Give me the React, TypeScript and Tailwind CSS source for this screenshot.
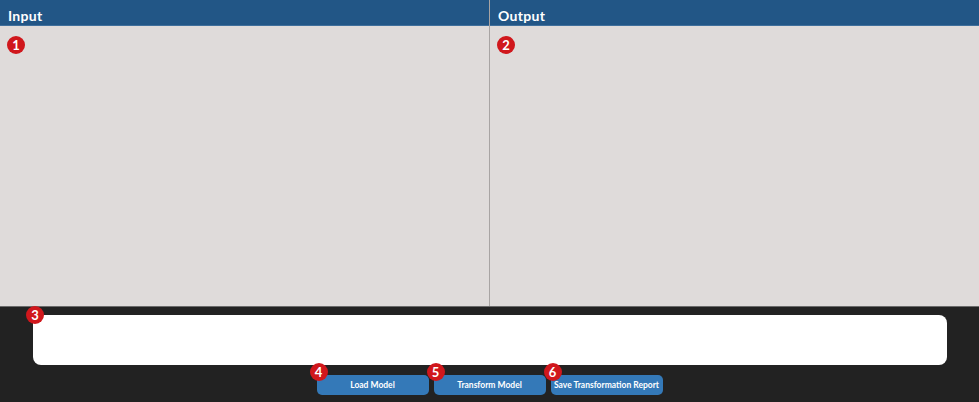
// Model transformer layout: input/output panes, log box, action buttons.

function Badge({ n, className }: { n: number; className?: string }) {
  return (
    <span
      className={
        "absolute flex h-[18px] w-[18px] items-center justify-center rounded-full bg-[#d0171c] text-[13px] font-bold leading-none text-white " +
        (className ?? "")
      }
    >
      {n}
    </span>
  );
}

function Pane({ title, n, border }: { title: string; n: number; border?: boolean }) {
  return (
    <div className={"flex min-w-0 flex-1 flex-col " + (border ? "border-l border-[#a8a4a3]" : "")}>
      <div className="flex h-[26px] shrink-0 items-center border-b border-[#3f6f9c] bg-[#225686] px-2 pt-[5px] text-[14px] font-bold tracking-[0.3px] text-white">
        {title}
      </div>
      <div className="relative flex-1 bg-[#dfdbda]">
        <Badge n={n} className="left-[7px] top-[10px]" />
      </div>
    </div>
  );
}

function ActionButton({ label, n }: { label: string; n: number }) {
  return (
    <div className="relative">
      <button
        type="button"
        className="block h-5 w-[112px] whitespace-nowrap rounded-[5px] bg-[#3479b8] pt-[1px] text-[8.5px] font-bold text-white"
      >
        {label}
      </button>
      <Badge n={n} className="-left-[7px] -top-[12px]" />
    </div>
  );
}

export default function App() {
  return (
    <div
      className="flex h-[402px] w-[979px] flex-col overflow-hidden"
      style={{ fontFamily: "Lato, 'DejaVu Sans', sans-serif" }}
    >
      <div className="flex h-[306px] shrink-0">
        <Pane title="Input" n={1} />
        <Pane title="Output" n={2} border />
      </div>
      <div className="flex flex-1 flex-col border-t border-[#6a6a6a] bg-[#222222] pt-2">
        <div className="relative ml-[33px] mr-[32px] h-[50px] rounded-lg bg-white">
          <Badge n={3} className="-left-[7px] -top-[9px]" />
        </div>
        <div className="mt-[10px] flex justify-center gap-[5px]">
          <ActionButton label="Load Model" n={4} />
          <ActionButton label="Transform Model" n={5} />
          <ActionButton label="Save Transformation Report" n={6} />
        </div>
      </div>
    </div>
  );
}
